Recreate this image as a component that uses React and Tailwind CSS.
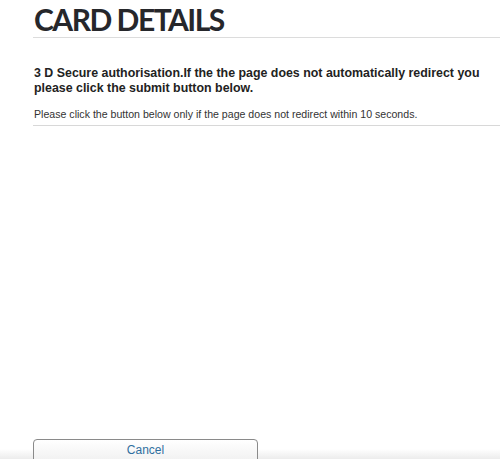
export default function App() {
  return (
    <div className="h-[459px] w-[500px] overflow-hidden bg-[linear-gradient(to_bottom,#ffffff_0px,#ffffff_449px,#ececec_459px)]">
      <div className="ml-[33px] w-[520px] flex flex-col">
        <h1 className="pl-[1px] pt-[1px] h-[37px] text-[30px] leading-[37px] font-bold text-[#26272b] tracking-[-1.5px]" style={{ fontFamily: "Lato, 'Open Sans', sans-serif" }}>
          CARD DETAILS
        </h1>
        <div className="h-px bg-[#dcdcdc]"></div>
        <div style={{ fontFamily: "'Liberation Sans', Arial, sans-serif" }}>
          <h2 className="mt-[28px] pl-[1px] text-[12.4px] leading-[15px] font-bold text-[#222] w-[460px]">
            3 D Secure authorisation.If the the page does not automatically redirect you please click the submit button below.
          </h2>
          <p className="mt-[12px] pl-[1px] text-[10.6px] leading-[13px] text-[#333]">
            Please click the button below only if the page does not redirect within 10 seconds.
          </p>
          <div className="mt-[4px] h-px bg-[#d8d8d8]"></div>
          <div className="mt-[311px]">
            <button className="w-[225px] h-[30px] border border-[#8a8a8a] rounded-t-[4px] bg-[linear-gradient(to_bottom,#ffffff,#ececec)] text-[12px] text-[#2f6f9f] pb-[8px]">
              Cancel
            </button>
          </div>
        </div>
      </div>
    </div>
  );
}
